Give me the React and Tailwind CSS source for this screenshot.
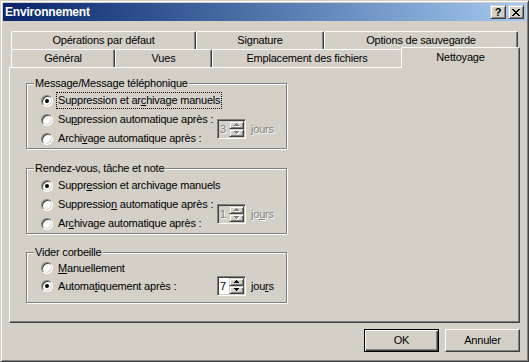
import React from 'react';

// Win2000 classic "Environnement" dialog, Nettoyage tab
const raised = 'border border-t-white border-l-white border-r-[#404040] border-b-[#404040] shadow-[inset_-1px_-1px_0_#808080]';

function CloseGlyph() {
  return (
    <svg width="8" height="7" viewBox="0 0 8 7" shapeRendering="crispEdges">
      <path d="M0 0h2v1h1v1h2V1h1V0h2v1H7v1H6v1H5v1h1v1h1v1h1v1H6V6H5V5H3v1H2v1H0V6h1V5h1V4h1V3H2V2H1V1H0z" fill="#000" />
    </svg>
  );
}

function CaptionButton({ children }) {
  return (
    <div className="w-[16px] h-[14px] flex items-center justify-center bg-[#d4d0c8] border border-t-[#d4d0c8] border-l-[#d4d0c8] border-r-[#404040] border-b-[#404040] shadow-[inset_1px_1px_0_#fff,inset_-1px_-1px_0_#808080]">
      {children}
    </div>
  );
}

function Tab({ className = '', children }) {
  return (
    <div className={`h-full shrink-0 flex items-center justify-center bg-[#d4d0c8] border-t border-l border-t-white border-l-white rounded-tl-[2px] rounded-tr-[2px] ${className}`}>
      {children}
    </div>
  );
}

function Radio({ checked }) {
  return (
    <span className="w-[12px] h-[12px] shrink-0 rounded-full bg-white border border-t-[#808080] border-l-[#808080] border-r-white border-b-white shadow-[inset_1px_1px_0_#404040,inset_-1px_-1px_0_#d4d0c8] flex items-center justify-center">
      {checked && <span className="w-[4px] h-[4px] rounded-full bg-black" />}
    </span>
  );
}

function Row({ checked, className = '', children }) {
  return (
    <div className={`flex items-center gap-[5px] ${className}`}>
      <Radio checked={checked} />
      {children}
    </div>
  );
}

function Arrow({ up, disabled }) {
  const d = up ? 'M2 0h1v1h1v1h1v1H0V2h1V1h1z' : 'M0 0h5v1H4v1H3v1H2V2H1V1H0z';
  return (
    <svg width="6" height="4" viewBox="0 0 6 4" shapeRendering="crispEdges">
      {disabled && <path d={d} fill="#fff" transform="translate(1 1)" />}
      <path d={d} fill={disabled ? '#808080' : '#000'} />
    </svg>
  );
}

function SpinButton({ up, disabled }) {
  return (
    <div className="h-[8px] flex items-center justify-center pl-[1px] bg-[#d4d0c8] border border-t-[#d4d0c8] border-l-[#d4d0c8] border-r-[#404040] border-b-[#404040] shadow-[inset_1px_1px_0_#fff,inset_-1px_-1px_0_#808080]">
      <Arrow up={up} disabled={disabled} />
    </div>
  );
}

function Spin({ value, disabled }) {
  return (
    <div className={`w-[29px] h-[20px] flex p-[1px] border border-t-[#808080] border-l-[#808080] border-r-white border-b-white shadow-[inset_1px_1px_0_#404040,inset_-1px_-1px_0_#d4d0c8] ${disabled ? 'bg-[#d4d0c8]' : 'bg-white'}`}>
      <span className={`flex-1 pl-[1px] leading-[16px] ${disabled ? 'text-[#808080] [text-shadow:1px_1px_0_#fff]' : ''}`}>{value}</span>
      <div className="w-[15px] flex flex-col">
        <SpinButton up disabled={disabled} />
        <SpinButton disabled={disabled} />
      </div>
    </div>
  );
}

function Days({ value, disabled, accel }) {
  return (
    <div className="flex items-center gap-[5px]">
      <Spin value={value} disabled={disabled} />
      <span className={disabled ? 'text-[#808080] [text-shadow:1px_1px_0_#fff]' : ''}>{accel}</span>
    </div>
  );
}

function Group({ title, className = '', children }) {
  return (
    <div className={`ml-[16px] w-[261px] border border-[#808080] shadow-[inset_1px_1px_0_#fff,1px_1px_0_#fff] ${className}`}>
      <div className="-mt-[7px] ml-[7px] px-[1px] w-fit bg-[#d4d0c8] leading-[13px]">{title}</div>
      {children}
    </div>
  );
}

export default function App() {
  return (
    <div className="w-[529px] h-[362px] bg-[#d4d0c8] p-[2px] border border-t-[#d4d0c8] border-l-[#d4d0c8] border-r-[#404040] border-b-[#404040] shadow-[inset_1px_1px_0_#fff,inset_-1px_-1px_0_#808080] font-['Liberation_Sans',Arial,sans-serif] text-[11px] tracking-[-0.2px] leading-[13px] text-black flex flex-col overflow-hidden">
      {/* Caption */}
      <div className="h-[18px] shrink-0 flex items-center pl-[2px] pr-[2px] bg-gradient-to-r from-[#0a246a] to-[#a6caf0]">
        <span className="flex-1 text-white font-bold text-[12px]">Environnement</span>
        <div className="flex gap-[2px]">
          <CaptionButton><span className="font-bold text-[11px] leading-[10px] tracking-normal">?</span></CaptionButton>
          <CaptionButton><CloseGlyph /></CaptionButton>
        </div>
      </div>

      {/* Tabs */}
      <div className="ml-[6px] mt-[10px] w-[511px] shrink-0">
        <div className="flex h-[18px] pl-[2px]">
          <Tab className="w-[185px] border-r border-r-[#404040] shadow-[inset_-1px_0_0_#808080]">Opérations par défaut</Tab>
          <Tab className="w-[128px] border-r border-r-[#404040] shadow-[inset_-1px_0_0_#808080]">Signature</Tab>
          <Tab className="w-[194px] border-r border-r-[#404040] shadow-[inset_-1px_0_0_#808080]">Options de sauvegarde</Tab>
        </div>
        <div className="flex items-start h-[18px] pl-[2px]">
          <Tab className="w-[104px] border-r border-r-[#404040] shadow-[inset_-1px_0_0_#808080]">Général</Tab>
          <Tab className="w-[97px] border-r border-r-[#404040] shadow-[inset_-1px_0_0_#808080]">Vues</Tab>
          <Tab className="w-[189px]">Emplacement des fichiers</Tab>
          <Tab className="w-[119px] !h-[21px] -mt-[2px] relative z-10 pb-[1px] border-r border-r-[#404040] shadow-[inset_-1px_0_0_#808080]">Nettoyage</Tab>
        </div>

        {/* Panel */}
        <div className="h-[256px] flex flex-col border border-t-white border-l-white border-r-[#404040] border-b-[#404040] shadow-[inset_-1px_-1px_0_#808080]">
          <Group title="Message/Message téléphonique" className="mt-[15px]">
            <div className="grid grid-cols-[176px_auto] grid-rows-[19px_19px_19px] pl-[14px] pt-[1px]">
              <Row checked className="col-span-2">
                <span className="outline outline-1 outline-dotted outline-black outline-offset-[1px]">Suppression et ar<u>c</u>hivage manuels</span>
              </Row>
              <Row className="col-start-1 row-start-2"><span>Su<u>p</u>pression automatique après :</span></Row>
              <Row className="col-start-1 row-start-3"><span>Archi<u>v</u>age automatique après :</span></Row>
              <div className="col-start-2 row-start-2 row-span-2 flex items-center">
                <Days value="3" disabled accel={<><u>j</u>ours</>} />
              </div>
            </div>
          </Group>

          <Group title="Rendez-vous, tâche et note" className="mt-[19px]">
            <div className="grid grid-cols-[176px_auto] grid-rows-[19px_19px_19px] pl-[14px] pt-[1px]">
              <Row checked className="col-span-2"><span>Suppr<u>e</u>ssion et archivage manuels</span></Row>
              <Row className="col-start-1 row-start-2"><span>Suppressio<u>n</u> automatique après :</span></Row>
              <Row className="col-start-1 row-start-3"><span>Ar<u>c</u>hivage automatique après :</span></Row>
              <div className="col-start-2 row-start-2 row-span-2 flex items-center">
                <Days value="1" disabled accel={<>jo<u>u</u>rs</>} />
              </div>
            </div>
          </Group>

          <Group title="Vider corbeille" className="mt-[18px]">
            <div className="grid grid-cols-[176px_auto] grid-rows-[16px_20px] pl-[14px] pt-[1px] pb-[6px]">
              <Row className="col-span-2"><span><u>M</u>anuellement</span></Row>
              <Row checked className="col-start-1 row-start-2"><span>Automa<u>t</u>iquement après :</span></Row>
              <div className="col-start-2 row-start-2 flex items-center">
                <Days value="7" accel={<>jou<u>r</u>s</>} />
              </div>
            </div>
          </Group>
        </div>

        {/* Buttons */}
        <div className="flex justify-end gap-[6px] mt-[6px]">
          <button className="w-[75px] h-[23px] border border-black bg-[#d4d0c8] shadow-[inset_1px_1px_0_#fff,inset_-1px_-1px_0_#404040,inset_-2px_-2px_0_#808080]">OK</button>
          <button className={`w-[75px] h-[23px] bg-[#d4d0c8] ${raised}`}>Annuler</button>
        </div>
      </div>
    </div>
  );
}
